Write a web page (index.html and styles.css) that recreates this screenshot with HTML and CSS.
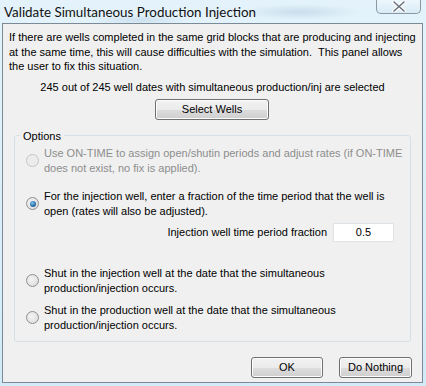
FILE: index.html
```html
<!DOCTYPE html>
<html lang="en">
<head>
    <meta charset="UTF-8">
    <title>Validate Simultaneous Production Injection</title>
    <link rel="stylesheet" href="styles.css">
</head>
<body>
    <div class="window">
        <div class="titlebar">
            <span class="title">Validate Simultaneous Production Injection</span>
            <button class="close-btn" type="button">
                <svg width="14" height="11" viewBox="0 0 14 11">
                    <path d="M2 1 L12 10 M12 1 L2 10" stroke="#fff" stroke-width="4" stroke-linecap="round"/>
                    <path d="M2 1 L12 10 M12 1 L2 10" stroke="#6b7480" stroke-width="1.6" stroke-linecap="round"/>
                </svg>
            </button>
        </div>
        <div class="client">
            <p class="intro">If there are wells completed in the same grid blocks that are producing and injecting at the same time, this will cause difficulties with the simulation.&nbsp; This panel allows the user to fix this situation.</p>
            <p class="count">245 out of 245 well dates with simultaneous production/inj are selected</p>
            <div class="center-row">
                <button class="btn btn-select" type="button">Select Wells</button>
            </div>
            <fieldset class="options">
                <legend>Options</legend>
                <label class="radio disabled">
                    <span class="dot"></span>
                    <span>Use ON-TIME to assign open/shutin periods and adjust rates (if <span class="nowrap">ON-TIME</span> does not exist, no fix is applied).</span>
                </label>
                <label class="radio radio-frac">
                    <span class="dot checked"></span>
                    <span>For the injection well, enter a fraction of the time period that the well is open (rates will also be adjusted).</span>
                </label>
                <div class="fraction-row">
                    <span>Injection well time period fraction</span>
                    <input class="fraction" type="text" value="0.5">
                </div>
                <label class="radio radio-shut">
                    <span class="dot"></span>
                    <span>Shut in the injection well at the date that the simultaneous production/injection occurs.</span>
                </label>
                <label class="radio">
                    <span class="dot"></span>
                    <span>Shut in the production well at the date that the simultaneous production/injection occurs.</span>
                </label>
            </fieldset>
            <div class="footer">
                <button class="btn btn-ok" type="button">OK</button>
                <button class="btn btn-nothing" type="button">Do Nothing</button>
            </div>
        </div>
    </div>
</body>
</html>
```

FILE: styles.css
```css
:root {
    --client-bg: #f0f0f0;
    --frame-line: #7c8a98;
    --text: #000;
    --text-disabled: #8d8d8d;
}

body {
    margin: 0;
    padding: 0;
    font-family: 'Liberation Sans', Arial, sans-serif;
    font-size: 11px;
    color: var(--text);
}

.window {
    width: 426px;
    height: 386px;
    box-sizing: border-box;
    padding: 0 3px 3px 2px;
    display: flex;
    flex-direction: column;
    background:
        radial-gradient(ellipse 60px 8px at 300px 12px, rgba(150, 180, 205, 0.35), transparent),
        radial-gradient(ellipse 50px 6px at 140px 20px, rgba(150, 180, 205, 0.3), transparent),
        linear-gradient(180deg, #e4f3fb 0%, #d3ebf7 100%);
}

.titlebar {
    height: 23px;
    display: flex;
    justify-content: space-between;
    align-items: flex-start;
}

.title {
    font-family: Lato, 'Open Sans', sans-serif;
    font-size: 13.4px;
    color: #111;
    margin: 4px 0 0 2px;
}

.close-btn {
    width: 45px;
    height: 15px;
    margin: -1px 2px 0 0;
    padding: 0;
    border: 1px solid #8a96a2;
    border-top: none;
    border-radius: 0 0 5px 5px;
    background: linear-gradient(180deg, #eef7fc, #d9ebf6);
    display: flex;
    align-items: center;
    justify-content: center;
}

.client {
    flex: 1;
    background: var(--client-bg);
    border: 1px solid var(--frame-line);
    display: flex;
    flex-direction: column;
    padding: 0 10px 0 10px;
}

.intro {
    margin: 6px -8px 0 -4px;
    line-height: 14.5px;
}

.count {
    margin: 7px 0 0 0;
    text-align: center;
}

.center-row {
    display: flex;
    justify-content: center;
    margin-top: 6px;
    padding-right: 1px;
}

.btn {
    height: 21px;
    padding: 0;
    font-family: 'Liberation Sans', Arial, sans-serif;
    font-size: 11px;
    color: #000;
    border: 1px solid #707070;
    border-radius: 3px;
    background: linear-gradient(180deg, #f2f2f2 0%, #ebebeb 50%, #dddddd 51%, #cfcfcf 100%);
    box-shadow: inset 0 0 0 1px #fcfcfc;
}

.btn-select {
    width: 114px;
}

.options {
    margin: 10px 1px 0 1px;
    padding: 0 0 8px 0;
    border: 1px solid #d5dfe5;
    border-radius: 3px;
    display: flex;
    flex-direction: column;
}

.options legend {
    padding: 0 3px;
    margin-left: 5px;
}

.radio {
    display: flex;
    align-items: center;
    gap: 5px;
    margin: 7px 10px 0 11px;
    line-height: 15px;
}

.radio.disabled {
    color: var(--text-disabled);
    margin-top: 4px;
    margin-right: 1px;
}

.nowrap {
    white-space: nowrap;
}

.radio.radio-frac {
    margin-top: 13px;
}

.radio.radio-shut {
    margin-top: 24px;
}

.dot {
    flex: none;
    width: 11px;
    height: 11px;
    border-radius: 50%;
    border: 1px solid #8e8f8f;
    background: radial-gradient(circle at 40% 40%, #f4f4f4, #d8d8d8);
    display: flex;
    align-items: center;
    justify-content: center;
}

.disabled .dot {
    border-color: #c4c4c4;
    background: #ececec;
}

.dot.checked::after {
    content: "";
    width: 6px;
    height: 6px;
    border-radius: 50%;
    background: radial-gradient(circle at 40% 35%, #7ac5f0, #1a5d9a 70%, #0e3f77);
}

.fraction-row {
    display: flex;
    justify-content: flex-end;
    align-items: center;
    gap: 6px;
    margin: 4px 16px 0 0;
}

.fraction {
    width: 61px;
    height: 19px;
    box-sizing: border-box;
    border: 1px solid #dfe4e8;
    background: #fff;
    text-align: center;
    font-family: 'Liberation Sans', Arial, sans-serif;
    font-size: 11px;
    padding: 0;
}

.footer {
    display: flex;
    justify-content: flex-end;
    gap: 16px;
    margin-top: 15px;
}

.btn-ok {
    width: 72px;
}

.btn-nothing {
    width: 73px;
}
```
